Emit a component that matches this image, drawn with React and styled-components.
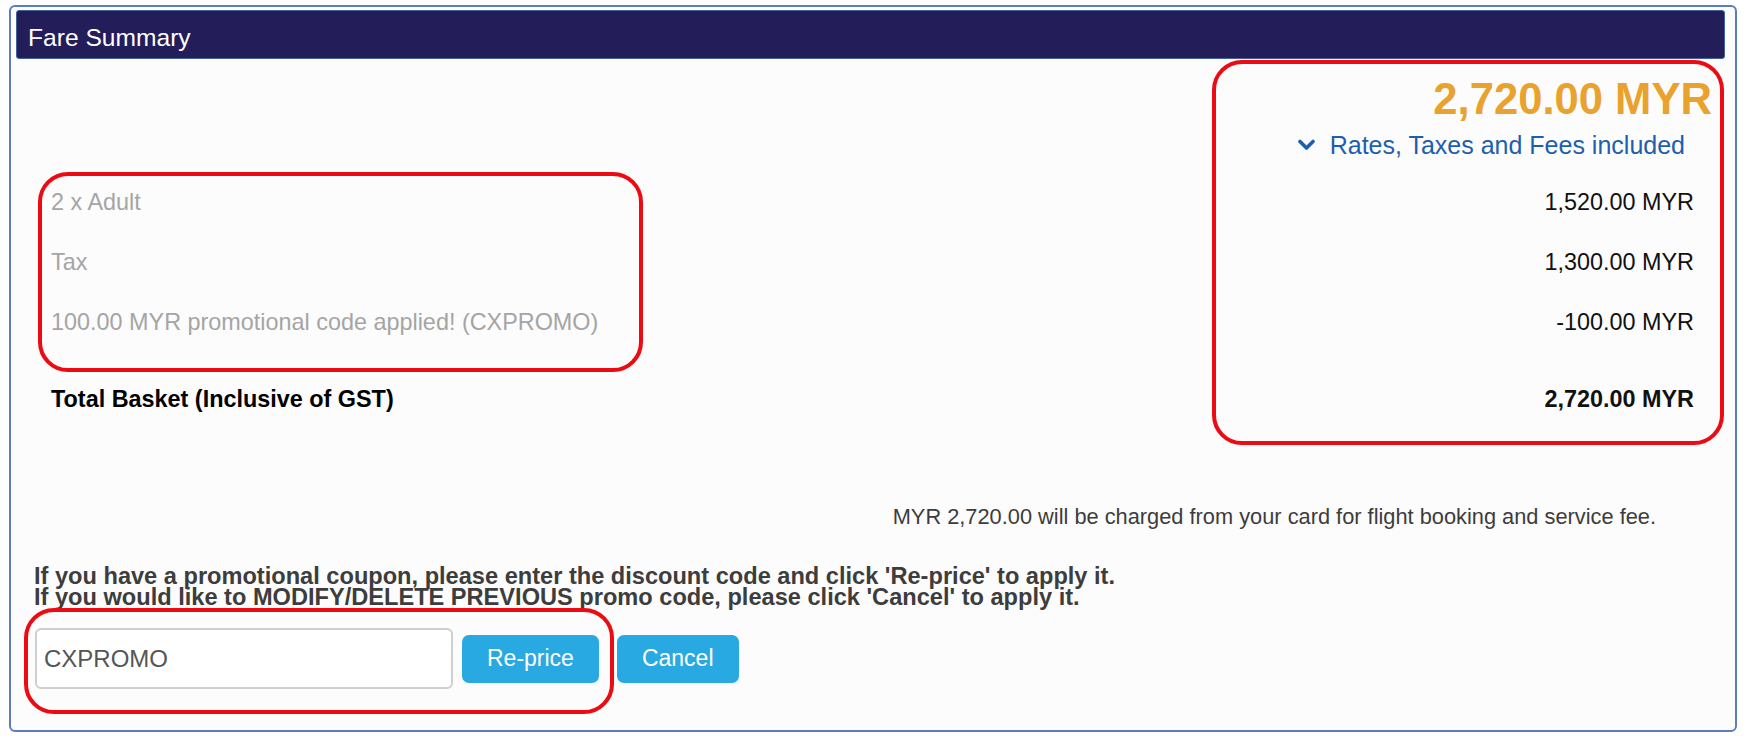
import React from 'react'
import styled, { createGlobalStyle } from 'styled-components'

// GLOBAL
const GlobalStyle = createGlobalStyle`
    html, body {
        margin: 0;
        background: #ffffff;
    }
    body {
        font-family: "Liberation Sans", Arial, Helvetica, sans-serif;
    }
`

// STYLED
const Page = styled.div`
    padding: 5px 0 0 9px;
`

const Panel = styled.section`
    position: relative;
    box-sizing: border-box;
    width: 1728px;
    height: 727px;
    padding: 3px 10px 0 5px;
    border: 2px solid #5b7dbd;
    border-radius: 6px;
    background: #fcfcfc;
`

const Header = styled.h2`
    box-sizing: border-box;
    height: 49px;
    margin: 0;
    padding: 12px 11px 0;
    background: #231e59;
    border: 1px solid #44609a;
    border-radius: 3px;
    color: #ffffff;
    font-size: 24.6px;
    font-weight: normal;
    line-height: 30px;
`

const Body = styled.div`
    padding: 0 13px 0 18px;
`

const TotalBlock = styled.div`
    margin-top: 15px;
    text-align: right;
`

const BigAmount = styled.div`
    color: #e9a22d;
    font-size: 43.6px;
    font-weight: bold;
    line-height: 50px;
`

const RatesToggle = styled.div`
    display: flex;
    justify-content: flex-end;
    align-items: center;
    gap: 15px;
    margin: 6px 27px 0 0;
    color: #1c5fae;
    font-size: 25px;
    line-height: 30px;
    cursor: pointer;

    & svg {
        display: block;
    }
`

const Breakdown = styled.div`
    margin-top: 12px;
    padding: 0 18px 0 17px;
`

const Row = styled.div`
    display: flex;
    justify-content: space-between;
    height: 60px;
    margin-top: ${(p) => (p.$total ? '17px' : '0')};
    font-size: 23.4px;
    font-weight: ${(p) => (p.$total ? 'bold' : 'normal')};
    line-height: 60px;
`

const Label = styled.span`
    color: ${(p) => (p.$total ? '#000000' : '#a5a5a5')};
`

const Amount = styled.span`
    color: #111111;
`

const ChargeNote = styled.p`
    margin: 75px 0 0;
    padding-right: 56px;
    color: #3c3c3c;
    font-size: 21.8px;
    line-height: 26px;
    text-align: right;
`

const CouponText = styled.p`
    margin: 36px 0 0;
    color: #3d3d3d;
    font-size: 23.6px;
    font-weight: bold;
    line-height: 21px;
`

const CouponForm = styled.form`
    display: flex;
    align-items: center;
    margin: 20px 0 0 1px;
`

const CodeInput = styled.input`
    box-sizing: border-box;
    width: 418px;
    height: 61px;
    padding: 0 7px;
    border: 2px solid #cfcfcf;
    border-radius: 6px;
    background: #ffffff;
    color: #555555;
    font-family: inherit;
    font-size: 24px;
    outline: none;
`

const Button = styled.button`
    height: 48px;
    margin-left: ${(p) => p.$gap}px;
    padding: 0 25px;
    border: none;
    border-radius: 7px;
    background: #29a9e1;
    color: #ffffff;
    font-family: inherit;
    font-size: 23px;
    cursor: pointer;
`

// annotation rings drawn over the screenshot
const Mark = styled.div`
    position: absolute;
    top: ${(p) => p.$top}px;
    left: ${(p) => p.$left}px;
    width: ${(p) => p.$w}px;
    height: ${(p) => p.$h}px;
    box-sizing: border-box;
    border: 4px solid #ec0b12;
    border-radius: 30px;
    pointer-events: none;
`

const Chevron = () => (
    <svg width="17" height="12" viewBox="0 0 17 12">
        <polyline points="2,2.5 8.5,9 15,2.5" fill="none" stroke="#1c5fae" strokeWidth="3.6" strokeLinecap="round" strokeLinejoin="round" />
    </svg>
)

const rows = [
    { label: '2 x Adult', amount: '1,520.00 MYR' },
    { label: 'Tax', amount: '1,300.00 MYR' },
    { label: '100.00 MYR promotional code applied! (CXPROMO)', amount: '-100.00 MYR' },
]

const App = () => {
    return (
        <Page>
            <GlobalStyle />
            <Panel>
                <Header>Fare Summary</Header>
                <Body>
                    <TotalBlock>
                        <BigAmount>2,720.00 MYR</BigAmount>
                        <RatesToggle>
                            <Chevron />
                            <span>Rates, Taxes and Fees included</span>
                        </RatesToggle>
                    </TotalBlock>

                    <Breakdown>
                        {rows.map((r) => (
                            <Row key={r.label}>
                                <Label>{r.label}</Label>
                                <Amount>{r.amount}</Amount>
                            </Row>
                        ))}
                        <Row $total>
                            <Label $total>Total Basket (Inclusive of GST)</Label>
                            <Amount>2,720.00 MYR</Amount>
                        </Row>
                    </Breakdown>

                    <ChargeNote>MYR 2,720.00 will be charged from your card for flight booking and service fee.</ChargeNote>

                    <CouponText>
                        If you have a promotional coupon, please enter the discount code and click 'Re-price' to apply it.
                        <br />
                        If you would like to MODIFY/DELETE PREVIOUS promo code, please click 'Cancel' to apply it.
                    </CouponText>

                    <CouponForm onSubmit={(e) => e.preventDefault()}>
                        <CodeInput defaultValue="CXPROMO" />
                        <Button type="submit" $gap={9}>Re-price</Button>
                        <Button type="button" $gap={18}>Cancel</Button>
                    </CouponForm>
                </Body>

                <Mark $left={27} $top={165} $w={605} $h={200} />
                <Mark $left={1201} $top={53} $w={512} $h={385} />
                <Mark $left={13} $top={601} $w={590} $h={106} />
            </Panel>
        </Page>
    )
}

export default App
